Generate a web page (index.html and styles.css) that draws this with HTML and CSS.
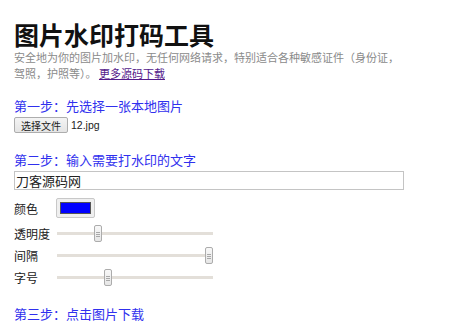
FILE: index.html
```html
<!DOCTYPE html>
<html lang="zh-CN">
<head>
<meta charset="utf-8">
<title>图片水印打码工具</title>
<link rel="stylesheet" href="styles.css">
</head>
<body>
<div class="page">
  <h1 class="title">图片水印打码工具</h1>
  <p class="intro"><span>安全地为你的图片加水印，无任何网络请求，特别适合各种敏感证件（身份证，</span><span>驾照，护照等）。</span> <a href="#" class="more">更多源码下载</a></p>

  <h3 class="step">第一步：先选择一张本地图片</h3>
  <div class="file-row">
    <span class="file-btn">选择文件</span>
    <span class="file-name">12.jpg</span>
  </div>

  <h3 class="step">第二步：输入需要打水印的文字</h3>
  <input class="text-input" type="text" value="刀客源码网">

  <div class="controls">
    <div class="control color-row">
      <span class="label">颜色</span>
      <span class="color-box"><span class="swatch"></span></span>
    </div>
    <div class="control">
      <span class="label">透明度</span>
      <input class="slider" type="range" min="0" max="100" value="25">
    </div>
    <div class="control">
      <span class="label">间隔</span>
      <input class="slider" type="range" min="0" max="100" value="100">
    </div>
    <div class="control">
      <span class="label">字号</span>
      <input class="slider" type="range" min="0" max="100" value="32">
    </div>
  </div>

  <h3 class="step step-last">第三步：点击图片下载</h3>
</div>
</body>
</html>
```

FILE: styles.css
```css
html, body {
  margin: 0;
  padding: 0;
  background: #ffffff;
}

body {
  font-family: "Liberation Sans", "Noto Sans CJK SC", sans-serif;
  color: #222222;
}

.page {
  width: 390px;
  padding-left: 14px;
}

.title {
  margin: 19px 0 0;
  font-family: "Noto Sans CJK SC", sans-serif;
  font-size: 25px;
  line-height: 30px;
  font-weight: 700;
  color: #111111;
}

.intro {
  margin: 0;
  font-family: "Noto Sans CJK SC", sans-serif;
  font-size: 11px;
  line-height: 16px;
  color: #8a8a8a;
}

.more {
  color: #551a8b;
  text-decoration: underline;
}

.step {
  margin: 16px 0 0;
  font-family: "Noto Sans CJK SC", sans-serif;
  font-size: 13px;
  line-height: 18px;
  font-weight: 400;
  color: #3030ee;
}

.file-row + .step {
  margin-top: 18px;
}

.step-last {
  margin-top: 17px;
}

.file-row {
  margin-top: 2px;
  display: flex;
  align-items: center;
  gap: 3px;
  height: 16px;
}

.file-btn {
  box-sizing: border-box;
  width: 54px;
  height: 16px;
  display: flex;
  align-items: center;
  justify-content: center;
  font-family: "Noto Sans CJK SC", sans-serif;
  font-size: 10px;
  color: #222222;
  border: 1px solid #adadad;
  border-radius: 2px;
  background: linear-gradient(#f4f4f4, #e4e4e4);
}

.file-name {
  font-family: "Liberation Sans", sans-serif;
  font-size: 10.5px;
  color: #222222;
}

.text-input {
  display: block;
  box-sizing: border-box;
  width: 390px;
  height: 19px;
  margin: 2px 0 0;
  padding: 0 1px;
  border: 1px solid #c4c4c4;
  font-family: "Noto Sans CJK SC", sans-serif;
  font-size: 13px;
  color: #222222;
  outline: none;
}

.controls {
  margin-top: 8px;
  display: flex;
  flex-direction: column;
}

.control {
  display: flex;
  align-items: center;
  height: 22px;
}

.color-row {
  height: 20px;
  margin-bottom: 4px;
}

.label {
  width: 43px;
  flex: none;
  font-family: "Noto Sans CJK SC", sans-serif;
  font-size: 12px;
  color: #222222;
}

.color-row .label {
  width: 42px;
}

.color-box {
  box-sizing: border-box;
  width: 39px;
  height: 20px;
  padding: 3px 3px;
  border: 1px solid #c8c8c8;
  border-radius: 2px;
  background: #efefef;
  display: flex;
}

.swatch {
  flex: 1;
  background: #0000ff;
  border: 1px solid #555555;
}

.slider {
  -webkit-appearance: none;
  appearance: none;
  width: 156px;
  height: 17px;
  margin: 0;
  padding: 0;
  background: transparent;
}

.slider::-webkit-slider-runnable-track {
  height: 3px;
  background: #e3dfd9;
}

.slider::-webkit-slider-thumb {
  -webkit-appearance: none;
  appearance: none;
  box-sizing: border-box;
  width: 8px;
  height: 17px;
  margin-top: -7px;
  border: 1px solid #acacac;
  border-radius: 2px;
  background:
    linear-gradient(#a8a8a8, #a8a8a8) 1px 6px / 4px 1px no-repeat,
    linear-gradient(#a8a8a8, #a8a8a8) 1px 8px / 4px 1px no-repeat,
    linear-gradient(#a8a8a8, #a8a8a8) 1px 10px / 4px 1px no-repeat,
    linear-gradient(#f8f8f8, #e6e6e6);
}
```
